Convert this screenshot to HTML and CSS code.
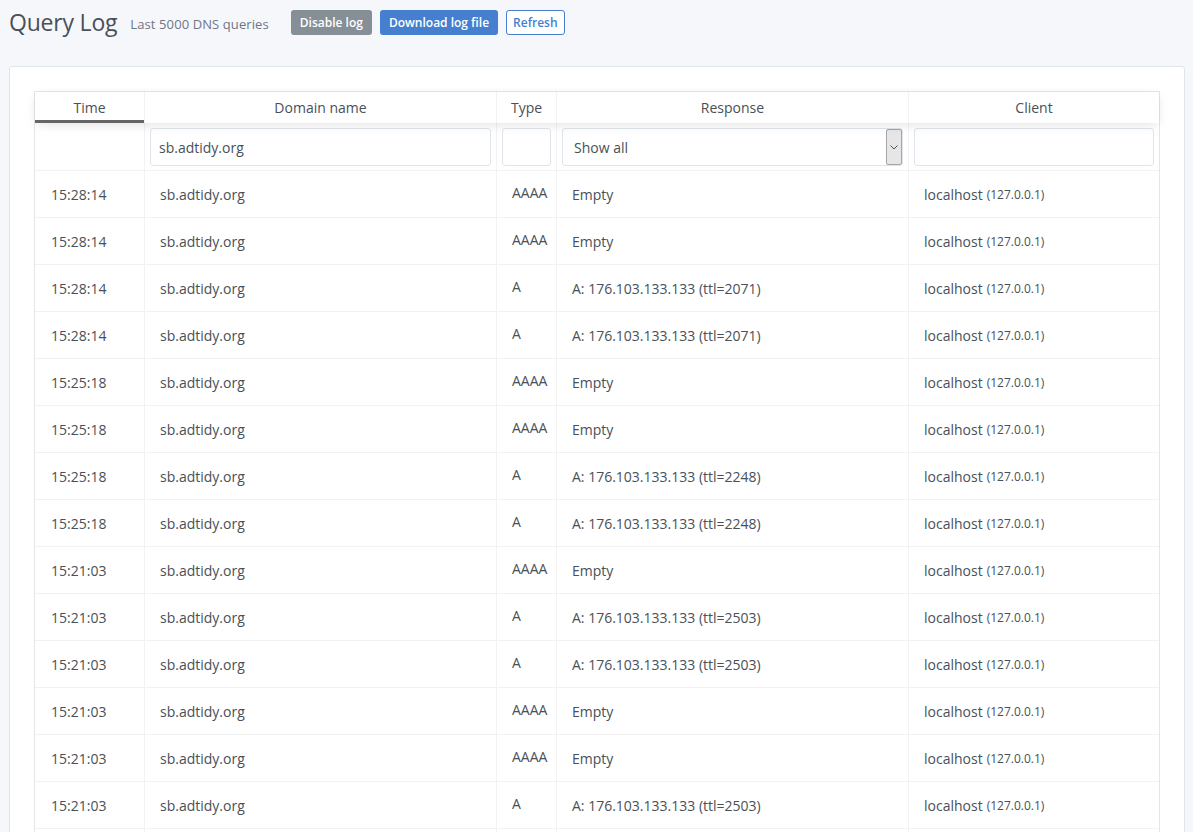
FILE: index.html
```html
<html lang="en">
<head>
    <meta charset="UTF-8">
    <title>Query Log</title>
    <link rel="stylesheet" href="styles.css">
</head>
<body>
    <div class="page-header">
        <h1 class="page-title">Query Log</h1>
        <span class="page-subtitle">Last 5000 DNS queries</span>
        <button class="btn btn-gray">Disable log</button>
        <button class="btn btn-blue">Download log file</button>
        <button class="btn btn-outline">Refresh</button>
    </div>

    <div class="card">
        <div class="rt-table">
            <div class="rt-head">
                <div class="rt-th col-time sort-desc">Time</div>
                <div class="rt-th col-domain">Domain name</div>
                <div class="rt-th col-type">Type</div>
                <div class="rt-th col-response">Response</div>
                <div class="rt-th col-client">Client</div>
            </div>
            <div class="rt-filters">
                <div class="rt-fc col-time"></div>
                <div class="rt-fc col-domain"><input type="text" value="sb.adtidy.org"></div>
                <div class="rt-fc col-type"><input type="text"></div>
                <div class="rt-fc col-response">
                    <div class="fake-select">
                        <span>Show all</span>
                        <span class="select-arrow">
                            <svg width="8" height="5" viewBox="0 0 8 5"><path d="M0.5 0.5 L4 4 L7.5 0.5" fill="none" stroke="#555" stroke-width="1"/></svg>
                        </span>
                    </div>
                </div>
                <div class="rt-fc col-client"><input type="text"></div>
            </div>
            <div class="rt-body" id="rows"></div>
            <div class="rt-tr rt-empty">
                <div class="rt-td col-time"></div>
                <div class="rt-td col-domain"></div>
                <div class="rt-td col-type"></div>
                <div class="rt-td col-response"></div>
                <div class="rt-td col-client"></div>
            </div>
        </div>
    </div>

    <script>
        var data = [
            ['15:28:14', 'AAAA', 'Empty'],
            ['15:28:14', 'AAAA', 'Empty'],
            ['15:28:14', 'A', 'A: 176.103.133.133 (ttl=2071)'],
            ['15:28:14', 'A', 'A: 176.103.133.133 (ttl=2071)'],
            ['15:25:18', 'AAAA', 'Empty'],
            ['15:25:18', 'AAAA', 'Empty'],
            ['15:25:18', 'A', 'A: 176.103.133.133 (ttl=2248)'],
            ['15:25:18', 'A', 'A: 176.103.133.133 (ttl=2248)'],
            ['15:21:03', 'AAAA', 'Empty'],
            ['15:21:03', 'A', 'A: 176.103.133.133 (ttl=2503)'],
            ['15:21:03', 'A', 'A: 176.103.133.133 (ttl=2503)'],
            ['15:21:03', 'AAAA', 'Empty'],
            ['15:21:03', 'AAAA', 'Empty'],
            ['15:21:03', 'A', 'A: 176.103.133.133 (ttl=2503)']
        ];
        var body = document.getElementById('rows');
        data.forEach(function(r) {
            var row = document.createElement('div');
            row.className = 'rt-tr';
            row.innerHTML =
                '<div class="rt-td col-time">' + r[0] + '</div>' +
                '<div class="rt-td col-domain">sb.adtidy.org</div>' +
                '<div class="rt-td col-type">' + r[1] + '</div>' +
                '<div class="rt-td col-response">' + r[2] + '</div>' +
                '<div class="rt-td col-client">localhost <small>(127.0.0.1)</small></div>';
            body.appendChild(row);
        });
    </script>
</body>
</html>
```

FILE: styles.css
```css
html, body {
    margin: 0;
    padding: 0;
}

body {
    font-family: "Open Sans", "Noto Sans", sans-serif;
    background-color: #f5f7fb;
    color: #495057;
    font-size: 14px;
    padding: 0 8px 0 9px;
    height: 832px;
    box-sizing: border-box;
    overflow: hidden;
}

.page-header {
    display: flex;
    align-items: center;
    height: 44px;
    margin-bottom: 22px;
}

.page-title {
    margin: 0;
    font-size: 23px;
    font-weight: 400;
    color: #495057;
    letter-spacing: -0.2px;
}

.page-subtitle {
    font-size: 13px;
    color: #6e7687;
    margin: 3px 22px 0 13px;
    letter-spacing: 0.1px;
}

.btn {
    font-family: inherit;
    font-size: 12px;
    font-weight: 600;
    height: 25px;
    padding: 0 8px;
    border-radius: 3px;
    border: 1px solid transparent;
    margin-right: 8px;
    cursor: pointer;
}

.btn-gray {
    background-color: #868e96;
    color: #fff;
}

.btn-blue {
    background-color: #467fcf;
    color: #fff;
}

.btn-outline {
    background-color: #fff;
    border-color: #467fcf;
    color: #467fcf;
    padding: 0 6px;
}

.card {
    background: #fff;
    border: 1px solid #e0e5ec;
    border-radius: 3px;
    padding: 24px 24px 0;
    height: 800px;
}

.rt-table {
    border: 1px solid rgba(0,0,0,0.1);
    border-bottom: none;
}

.rt-head,
.rt-filters,
.rt-tr {
    display: flex;
}

.col-time { width: 110px; }
.col-domain { width: 352px; }
.col-type { width: 60px; }
.col-response { width: 352px; }
.col-client { width: 250px; }

.rt-head {
    height: 31px;
    box-shadow: 0 3px 12px -2px rgba(0,0,0,0.13);
    position: relative;
    z-index: 1;
    background: #fff;
}

.rt-th {
    box-sizing: border-box;
    border-right: 1px solid rgba(0,0,0,0.05);
    text-align: center;
    line-height: 31px;
}

.rt-th:last-child,
.rt-fc:last-child,
.rt-td:last-child {
    border-right: none;
}

.sort-desc {
    box-shadow: inset 0 -3px 0 0 rgba(0,0,0,0.6);
}

.rt-filters {
    height: 48px;
    border-bottom: 1px solid rgba(0,0,0,0.05);
    box-sizing: border-box;
}

.rt-fc {
    box-sizing: border-box;
    border-right: 1px solid rgba(0,0,0,0.05);
    padding: 5px 5px;
}

.rt-fc input {
    width: 100%;
    height: 38px;
    box-sizing: border-box;
    border: 1px solid #e0e5ec;
    border-radius: 3px;
    font-family: inherit;
    font-size: 14px;
    color: #495057;
    padding: 0 8px;
    outline: none;
}

.fake-select {
    height: 38px;
    box-sizing: border-box;
    border: 1px solid #e0e5ec;
    border-radius: 3px;
    display: flex;
    align-items: center;
    justify-content: space-between;
    padding-left: 11px;
}

.select-arrow {
    width: 16px;
    height: 36px;
    background: #e6e6e6;
    border: 1px solid #a6a6a6;
    border-radius: 2px;
    box-sizing: border-box;
    display: flex;
    align-items: center;
    justify-content: center;
}

.rt-tr {
    height: 47px;
    border-bottom: 1px solid rgba(0,0,0,0.05);
    box-sizing: border-box;
}

.rt-td {
    box-sizing: border-box;
    border-right: 1px solid rgba(0,0,0,0.05);
    padding: 0 15px;
    display: flex;
    align-items: center;
    white-space: nowrap;
}

.rt-td.col-time {
    padding-left: 16px;
}

.rt-td.col-type {
    padding-bottom: 3px;
}

.rt-td small {
    font-size: 12px;
    margin-left: 4px;
    margin-top: 1px;
}
```
